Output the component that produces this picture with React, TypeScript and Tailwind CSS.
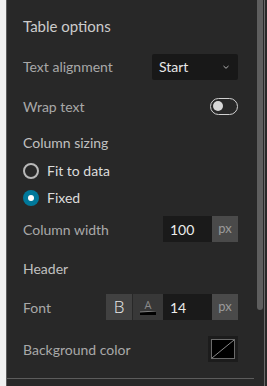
import React from "react";

const font = { fontFamily: "Lato, 'Open Sans', sans-serif" };

function Row({ label, children, h = "h-[40px]" }: { label: string; children?: React.ReactNode; h?: string }) {
  return (
    <div className={`flex items-center justify-between ${h}`}>
      <span className="text-[14px] text-[#a8a8a8]">{label}</span>
      {children}
    </div>
  );
}

export default function App() {
  return (
    <div className="w-[267px] h-[386px] bg-[#f0f0f0] flex overflow-hidden" style={font}>
      <div className="w-[6px] shrink-0 bg-[#f0f0f0]" />
      <div className="w-px shrink-0 bg-[#5c5c5c]" />
      <div className="flex-1 bg-[#282828] flex">
        <div className="flex-1 flex flex-col">
          <div className="pl-[16px] pr-[18px] flex flex-col flex-1">
            <div className="h-[12px]" />
            <div className="h-[28px] flex items-center text-[15px] text-[#cccccc]">Table options</div>
            <div className="h-[13px]" />
            <Row label="Text alignment" h="h-[27px]">
              <div className="w-[86px] h-[26px] bg-[#181818] rounded-[2px] flex items-center justify-between pl-[7px] pr-[8px]">
                <span className="text-[14px] text-[#e8e8e8]">Start</span>
                <svg width="8" height="6" viewBox="0 0 8 6">
                  <path d="M1.5 2 L4 4.3 L6.5 2" stroke="#b0b0b0" strokeWidth="1" fill="none" />
                </svg>
              </div>
            </Row>
            <div className="h-[13px]" />
            <Row label="Wrap text" h="h-[26px]">
              <div className="w-[28px] h-[17px] rounded-full border-[1.5px] border-[#d0d0d0] flex items-center pl-[2px]">
                <div className="w-[10px] h-[10px] rounded-full bg-[#d8d8d8]" />
              </div>
            </Row>
            <div className="h-[12px]" />
            <div className="h-[22px] flex items-center text-[14px] text-[#c0c0c0]">Column sizing</div>
            <div className="h-[4px]" />
            <div className="h-[27px] flex items-center gap-[8px]">
              <div className="w-[16px] h-[16px] rounded-full border-[2px] border-[#b8b8b8]" />
              <span className="text-[14px] text-[#dcdcdc]">Fit to data</span>
            </div>
            <div className="h-[27px] flex items-center gap-[8px]">
              <div className="w-[16px] h-[16px] rounded-full bg-[#00789a] flex items-center justify-center">
                <div className="w-[6px] h-[6px] rounded-full bg-white" />
              </div>
              <span className="text-[14px] text-[#dcdcdc]">Fixed</span>
            </div>
            <div className="h-[5px]" />
            <Row label="Column width" h="h-[26px]">
              <div className="flex h-[26px]">
                <div className="w-[49px] bg-[#1a1a1a] flex items-center pl-[7px] text-[14px] text-[#ececec]">100</div>
                <div className="w-[26px] bg-[#4a4a4a] flex items-center justify-center text-[13px] text-[#9a9a9a]">px</div>
              </div>
            </Row>
            <div className="h-[14px]" />
            <div className="h-[24px] flex items-center text-[14px] text-[#c0c0c0]">Header</div>
            <div className="h-[14px]" />
            <Row label="Font" h="h-[26px]">
              <div className="flex h-[26px]">
                <div className="w-[26px] bg-[#414141] flex items-center justify-center text-[17px] text-[#e8e8e8] font-light" style={{ fontFamily: "'Open Sans', sans-serif" }}>B</div>
                <div className="w-[30px] bg-[#383838] flex flex-col items-center justify-center ml-px">
                  <span className="text-[11px] leading-[11px] text-[#8a8a8a]" style={{ fontFamily: "'Open Sans', sans-serif" }}>A</span>
                  <svg width="16" height="4" viewBox="0 0 16 4" className="mt-[1px]">
                    <path d="M0 1 L16 0 L16 4 L0 4 Z" fill="#000" />
                    <path d="M0 1 L16 0" stroke="#9a9a9a" strokeWidth="0.8" />
                  </svg>
                </div>
                <div className="w-[49px] bg-[#1a1a1a] flex items-center pl-[7px] text-[14px] text-[#ececec]">14</div>
                <div className="w-[26px] bg-[#4a4a4a] flex items-center justify-center text-[13px] text-[#9a9a9a]">px</div>
              </div>
            </Row>
            <div className="h-[16px]" />
            <Row label="Background color" h="h-[26px]">
              <div className="w-[30px] h-[26px] bg-[#1c1c1c] flex items-center justify-center">
                <svg width="24" height="20" viewBox="0 0 24 20">
                  <rect x="0.5" y="0.5" width="23" height="19" fill="#000" stroke="#6a6a6a" />
                  <path d="M1 19 L23 1" stroke="#8a8a8a" strokeWidth="1" />
                </svg>
              </div>
            </Row>
            <div className="h-[16px]" />
          </div>
          <div className="h-px bg-[#5c5c5c] mr-[2px]" />
          <div className="flex-1" />
        </div>
        <div className="w-[8px] shrink-0 pl-[1px]">
          <div className="w-[6px] h-[310px] bg-[#5e5e5e] rounded-b-[3px]" />
        </div>
        <div className="w-px shrink-0 bg-[#6a6a6a]" />
        <div className="w-[2px] shrink-0" />
      </div>
    </div>
  );
}
